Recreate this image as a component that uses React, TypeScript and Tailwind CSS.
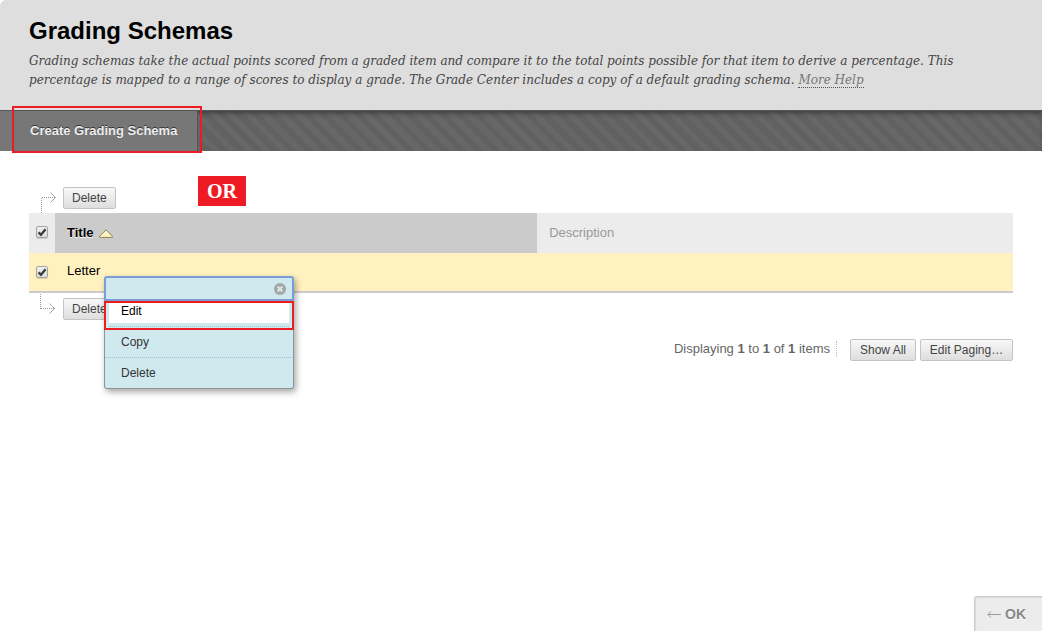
import { useState } from 'react';

const buttonClass =
  'h-[22px] rounded-xs border border-[#c4c4c4] bg-linear-to-b from-[#f8f8f8] to-[#dedede] px-2 text-xs text-[#444] whitespace-nowrap';

function ArrowUpRight() {
  return (
    <svg className="h-[22px] w-4 shrink-0" viewBox="0 0 16 22" fill="none" stroke="#999">
      <path d="M0.5 22V7" strokeDasharray="1 1" />
      <path d="M1 6.5H14" strokeDasharray="1 1" />
      <path d="M9.5 1.5L14.5 6.5L9.5 11.5" strokeWidth="0.9" />
    </svg>
  );
}

function ArrowDownRight() {
  return (
    <svg className="h-[22px] w-4 shrink-0" viewBox="0 0 16 22" fill="none" stroke="#999">
      <path d="M0.5 1V16" strokeDasharray="1 1" />
      <path d="M1 15.5H14" strokeDasharray="1 1" />
      <path d="M9.5 10.5L14.5 15.5L9.5 20.5" strokeWidth="0.9" />
    </svg>
  );
}

type CheckProps = { label: string; checked: boolean; onChange: (value: boolean) => void };

function Check({ label, checked, onChange }: CheckProps) {
  return (
    <label className="relative mx-auto block size-3">
      <input
        type="checkbox"
        aria-label={label}
        checked={checked}
        onChange={(e) => onChange(e.target.checked)}
        className="block size-3 appearance-none rounded-xs border border-[#a2a2a2] bg-linear-to-b from-[#f0f0f0] to-[#dcdcdc] shadow-[0_1px_1px_rgba(0,0,0,0.15)]"
      />
      {checked && (
        <svg className="pointer-events-none absolute inset-0 size-3" viewBox="0 0 12 12" fill="none">
          <path d="M2.6 6.4L4.9 8.8L9.6 3.2" stroke="#3c3c3c" strokeWidth="2.3" />
        </svg>
      )}
    </label>
  );
}

function ContextMenu({ onClose }: { onClose: () => void }) {
  return (
    <div className="absolute top-[23px] left-[49px] z-10 w-[190px] rounded-[3px] bg-[#d0e9ef] text-xs text-[#333] shadow-[2px_3px_6px_rgba(0,0,0,0.35)]">
      <div className="flex h-[25px] items-center justify-end rounded-t-[3px] border-2 border-[#7b9dd6] pr-1.5">
        <button type="button" aria-label="Close" onClick={onClose}>
          <svg className="size-3" viewBox="0 0 12 12">
            <circle cx="6" cy="6" r="6" fill="#a6a6a6" />
            <path d="M3.6 3.6L8.4 8.4M8.4 3.6L3.6 8.4" stroke="#d9edf1" strokeWidth="2" />
          </svg>
        </button>
      </div>
      <div className="h-[29px] border-2 border-[#ed1c24] px-[3px]">
        <button type="button" className="block h-5 w-full bg-white px-3 pb-1 text-left leading-4 text-black">
          Edit
        </button>
        <div className="mt-[3px] border-t border-dotted border-[#9dbfd3]" />
      </div>
      <div className="rounded-b-[3px] border border-t-0 border-[#8a9599]">
        <button type="button" className="block h-7 w-full border-b border-dotted border-[#9dbfd3] px-4 pb-1 text-left">
          Copy
        </button>
        <button type="button" className="block h-[30px] w-full px-4 text-left">
          Delete
        </button>
      </div>
    </div>
  );
}

export default function GradingSchemas() {
  const [rowChecked, setRowChecked] = useState(true);
  const [allChecked, setAllChecked] = useState(true);
  const [menuOpen, setMenuOpen] = useState(true);

  const toggleAll = (value: boolean) => {
    setAllChecked(value);
    setRowChecked(value);
  };

  return (
    <div className="flex min-h-screen flex-col bg-white font-['Liberation_Sans',Arial,sans-serif] text-[13px]">
      <header className="rounded-tl-md bg-[#dedede] px-[29px] pt-4 pb-5">
        <h1 className="text-2xl leading-[30px] font-bold text-black">Grading Schemas</h1>
        <p className="mt-1.5 font-['DejaVu_Serif',Georgia,serif] text-xs leading-[19px] text-[#444] italic">
          Grading schemas take the actual points scored from a graded item and compare it to the total points possible
          for that item to derive a percentage. This percentage is mapped to a range of scores to display a grade. The
          Grade Center includes a copy of a default grading schema.{' '}
          <a href="#help" className="border-b border-dotted border-[#555] text-[#777]">
            More Help
          </a>
        </p>
      </header>

      <nav className="flex h-[41px] border-t border-[#555] bg-[repeating-linear-gradient(45deg,#616161_0px,#616161_6px,#676767_6px,#676767_12px)] shadow-[inset_0_4px_5px_-2px_rgba(0,0,0,0.4)]">
        <div className="relative flex border-r border-[#555] bg-[#777]">
          <button
            type="button"
            className="pr-5 pl-[30px] text-[13px] font-bold text-[#eee] [text-shadow:0_-1px_0_#333]"
          >
            Create Grading Schema
          </button>
          <span className="pointer-events-none absolute -top-[5px] -right-[5px] -bottom-0.5 left-3 border-2 border-[#ed1c24]" />
        </div>
      </nav>

      <main className="relative px-[29px] pt-9">
        <span className="absolute top-[25px] left-[198px] bg-[#ed1c24] px-[9px] font-['Liberation_Serif',serif] text-xl leading-[30px] font-bold text-white">
          OR
        </span>

        <div className="flex h-[26px] gap-[6px] pl-3">
          <div className="pt-1">
            <ArrowUpRight />
          </div>
          <button type="button" className={buttonClass}>
            Delete
          </button>
        </div>

        <table className="w-full table-fixed border-collapse text-left">
          <colgroup>
            <col className="w-[26px]" />
            <col className="w-[49%]" />
            <col />
          </colgroup>
          <thead>
            <tr className="h-10 bg-[#ececec]">
              <th className="pb-0.5">
                <Check label="Select all" checked={allChecked} onChange={toggleAll} />
              </th>
              <th className="bg-[#cbcbcb] px-3 font-bold text-black">
                <span className="flex items-center gap-[5px] [text-shadow:0_1px_0_#fff]">
                  Title
                  <svg className="h-[9px] w-3.5" viewBox="0 0 14 9">
                    <path d="M7 0.8L13.4 7.2V8.4H0.6V7.2Z" fill="#fff2bf" stroke="#8f8159" />
                  </svg>
                </span>
              </th>
              <th className="px-3 font-normal text-[#999]">Description</th>
            </tr>
          </thead>
          <tbody>
            <tr className="h-[39px] border-b-2 border-[#cbcbcb] bg-[#fff2bf]">
              <td>
                <Check label="Select Letter" checked={rowChecked} onChange={setRowChecked} />
              </td>
              <td className="relative px-3 pb-0.5 text-black">
                Letter
                {menuOpen && <ContextMenu onClose={() => setMenuOpen(false)} />}
              </td>
              <td />
            </tr>
          </tbody>
        </table>

        <div className="flex gap-[7px] pt-[5px] pl-[11px]">
          <div className="-mt-[5px]">
            <ArrowDownRight />
          </div>
          <button type="button" className={buttonClass}>
            Delete
          </button>
        </div>

        <div className="mt-[19px] flex items-center justify-end gap-1 text-[#666]">
          <p className="mr-[9px] mb-0.5 border-r border-dotted border-[#bbb] pr-1.5 leading-4">
            Displaying <strong>1</strong> to <strong>1</strong> of <strong>1</strong> items
          </p>
          <button type="button" className={`${buttonClass} min-w-[66px]`}>
            Show All
          </button>
          <button type="button" className={`${buttonClass} min-w-[93px]`}>
            Edit Paging…
          </button>
        </div>
      </main>

      <footer className="mt-auto flex justify-end">
        <button
          type="button"
          className="flex h-[35px] items-center gap-1 rounded-tl-[3px] border-t border-l border-[#ccc] bg-[#ececec] pr-4 pl-3 text-sm font-bold text-[#888] shadow-[inset_1px_1px_1px_rgba(0,0,0,0.08)] [text-shadow:0_1px_0_#fff]"
        >
          <svg className="h-2 w-3.5" viewBox="0 0 14 8" fill="none" stroke="#999">
            <path d="M1 4.5H14M4 1.5L1 4.5L4 7.5" />
          </svg>
          OK
        </button>
      </footer>
    </div>
  );
}
